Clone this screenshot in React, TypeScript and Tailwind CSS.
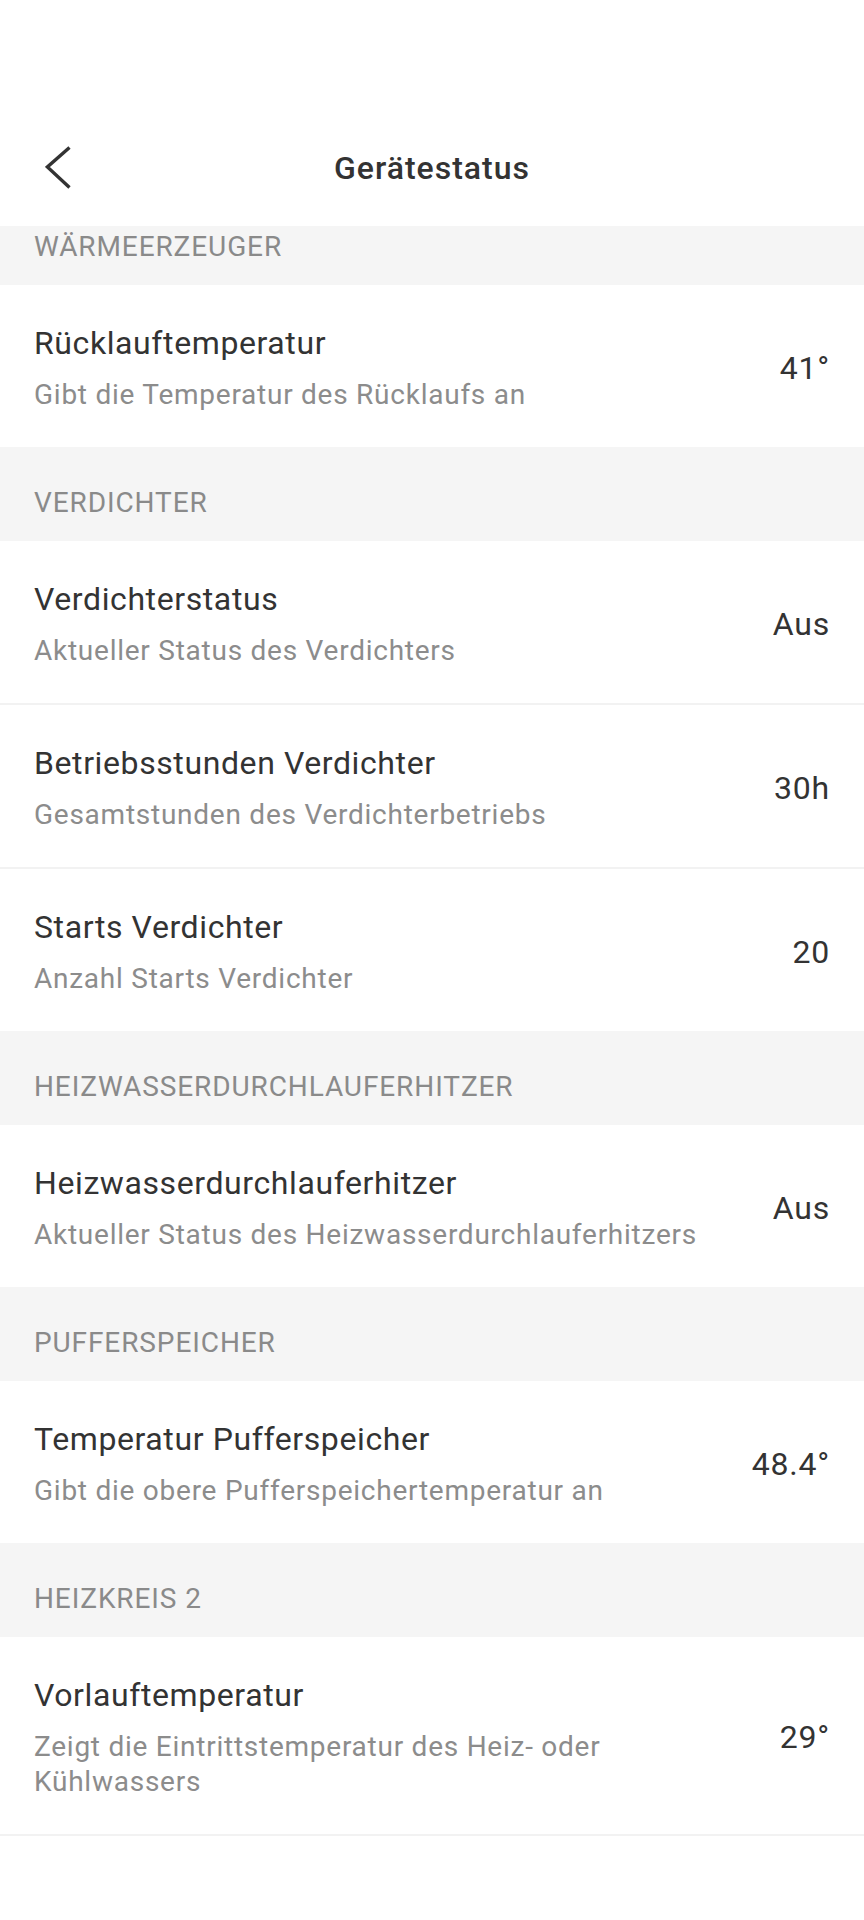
import React from "react";

type Item = { title: string; desc: string; value: string };
type Section = { name: string; items: Item[] };

const sections: Section[] = [
  {
    name: "WÄRMEERZEUGER",
    items: [
      { title: "Rücklauftemperatur", desc: "Gibt die Temperatur des Rücklaufs an", value: "41°" },
    ],
  },
  {
    name: "VERDICHTER",
    items: [
      { title: "Verdichterstatus", desc: "Aktueller Status des Verdichters", value: "Aus" },
      { title: "Betriebsstunden Verdichter", desc: "Gesamtstunden des Verdichterbetriebs", value: "30h" },
      { title: "Starts Verdichter", desc: "Anzahl Starts Verdichter", value: "20" },
    ],
  },
  {
    name: "HEIZWASSERDURCHLAUFERHITZER",
    items: [
      {
        title: "Heizwasserdurchlauferhitzer",
        desc: "Aktueller Status des Heizwasserdurchlauferhitzers",
        value: "Aus",
      },
    ],
  },
  {
    name: "PUFFERSPEICHER",
    items: [
      {
        title: "Temperatur Pufferspeicher",
        desc: "Gibt die obere Pufferspeichertemperatur an",
        value: "48.4°",
      },
    ],
  },
  {
    name: "HEIZKREIS 2",
    items: [
      {
        title: "Vorlauftemperatur",
        desc: "Zeigt die Eintrittstemperatur des Heiz- oder Kühlwassers",
        value: "29°",
      },
    ],
  },
];

function BackChevron() {
  return (
    <svg width="26" height="44" viewBox="0 0 26 44" fill="none" className="block">
      <polyline
        points="24.5,1.5 2.4,21 24.5,41.5"
        stroke="#333333"
        strokeWidth="3.4"
        strokeLinecap="butt"
        strokeLinejoin="miter"
      />
    </svg>
  );
}

function Row({ item, divider }: { item: Item; divider: boolean }) {
  return (
    <div className={divider ? "border-b-2 border-[#f2f2f2]" : ""}>
      <div className="flex items-center justify-between gap-[24px] px-[34px] pt-[38px] pb-[35px]">
        <div className="flex flex-1 flex-col">
          <div className="text-[32px] leading-[40px] tracking-[0.6px] text-[#333333]">{item.title}</div>
          <div className="mt-[14px] text-[28px] leading-[35px] tracking-[0.75px] text-[#8c8c8c]">
            {item.desc}
          </div>
        </div>
        <div className="text-[32px] leading-[40px] tracking-[0.8px] text-[#333333] whitespace-nowrap">
          {item.value}
        </div>
      </div>
    </div>
  );
}

export default function App() {
  return (
    <div className="min-h-[1920px] w-[864px] bg-white font-['Roboto',sans-serif] antialiased">
      <header className="pt-[144px] pb-[34px] bg-white">
        <div className="grid grid-cols-[1fr_auto_1fr] items-center h-[48px]">
          <div className="pl-[45px] flex items-center">
            <BackChevron />
          </div>
          <h1 className="text-[32px] font-medium tracking-[1px] text-[#333333] leading-[48px]">
            Gerätestatus
          </h1>
          <div />
        </div>
      </header>
      <main>
        {sections.map((s, si) => (
          <section key={s.name}>
            <div
              className={
                si === 0
                  ? "bg-[#f5f5f5] pl-[34px] pt-[3px] pb-[20px] text-[28px] leading-[36px] tracking-[0.9px] text-[#8a8a8a]"
                  : "bg-[#f5f5f5] pl-[34px] pt-[38px] pb-[20px] text-[28px] leading-[36px] tracking-[0.9px] text-[#8a8a8a]"
              }
            >
              {s.name}
            </div>
            {s.items.map((it, i) => (
              <Row
                key={it.title}
                item={it}
                divider={i < s.items.length - 1 || si === sections.length - 1}
              />
            ))}
          </section>
        ))}
      </main>
    </div>
  );
}
